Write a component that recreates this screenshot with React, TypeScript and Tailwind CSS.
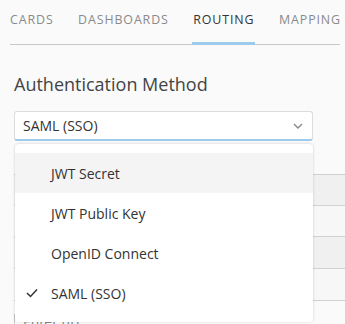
import React from "react";

const tabs = ["CARDS", "DASHBOARDS", "ROUTING", "MAPPING"];
const options = ["JWT Secret", "JWT Public Key", "OpenID Connect", "SAML (SSO)"];

export default function App() {
  return (
    <div
      className="relative w-[345px] h-[324px] overflow-hidden bg-[#fafafa] text-[#444]"
      style={{ fontFamily: '"Open Sans", "Noto Sans", sans-serif' }}
    >
      {/* Tabs */}
      <div className="ml-[10px] mt-[10px] flex w-[330px] border-b border-[#c8c8c8]">
        {tabs.map((t, i) => (
          <div
            key={t}
            className={`relative ${i < 3 ? "mr-[24.5px]" : ""} pb-[14px] text-[12.4px] leading-[20px] tracking-[0.9px] whitespace-nowrap ${
              t === "ROUTING" ? "text-[#333]" : "text-[#8a8a8a]"
            }`}
          >
            {t}
            {t === "ROUTING" && (
              <div className="absolute left-[-1px] right-[0px] bottom-[-1px] h-[3px] bg-[#9ccbec]" />
            )}
          </div>
        ))}
      </div>

      <div className="px-[14px]">
        <div className="mt-[26px] text-[18px] leading-[26px] text-[#444]">Authentication Method</div>

        {/* Select */}
        <div className="mt-[14px] w-[299px] h-[30px] flex items-center justify-between rounded-[3px] border border-[#dcdcdc] border-b-2 border-b-[#9ccbec] bg-white pl-[8px] pr-[8px]">
          <span className="text-[14px] text-[#333]">SAML (SSO)</span>
          <svg width="10" height="6" viewBox="0 0 10 6" className="mr-[1px]">
            <path d="M1 1l4 4 4-4" fill="none" stroke="#888" strokeWidth="1.4" />
          </svg>
        </div>

        {/* Background content behind dropdown */}
        <div className="mt-[33px] w-[340px] border-b border-[#cfcfcf]" />
        <div className="w-[340px]">
          <div className="h-[31px] bg-[#f0f0f0] border-b border-[#d2d2d2]" />
          <div className="h-[31px] bg-[#f7f7f7] border-b border-[#d2d2d2]" />
          <div className="h-[32px] bg-[#f0f0f0] border-b border-[#d2d2d2]" />
          <div className="h-[32px] bg-[#f7f7f7] border-b border-[#d2d2d2]" />
        </div>
        <div className="mt-[13px] h-[30px] w-[299px] border-l border-t border-[#c8c8c8] bg-white pl-[8px] text-[14px] leading-[14px] text-[#888]">
          Enter url
        </div>
      </div>

      {/* Dropdown menu */}
      <div className="absolute left-[15px] top-[144px] w-[298px] rounded-[4px] bg-white py-[9px] shadow-[0_0_3px_rgba(0,0,0,0.18)]">
        {options.map((o) => (
          <div
            key={o}
            className={`relative h-[40px] flex items-center pl-[36px] text-[14px] text-[#333] ${
              o === "JWT Secret" ? "bg-[#f4f4f4]" : ""
            }`}
          >
            {o === "SAML (SSO)" && (
              <svg width="12" height="10" viewBox="0 0 12 10" className="absolute left-[11px] top-[15px]">
                <path d="M1 5l3.5 3.5L11 1.5" fill="none" stroke="#333" strokeWidth="1.5" />
              </svg>
            )}
            {o}
          </div>
        ))}
      </div>
    </div>
  );
}
